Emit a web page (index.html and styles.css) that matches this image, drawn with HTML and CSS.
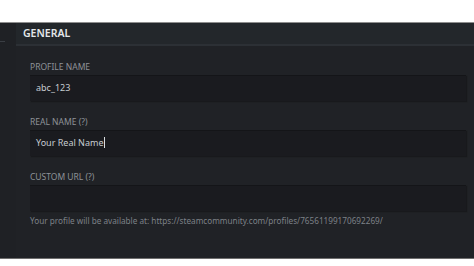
FILE: index.html
```html
<!DOCTYPE html>
<html lang="en">
  <head>
    <meta charset="UTF-8" />
    <meta name="viewport" content="width=device-width, initial-scale=1.0" />
    <title>Edit Profile - General</title>
    <link rel="stylesheet" href="styles.css">
  </head>
  <body>
    <div class="top-space"></div>

    <div class="panel">
      <div class="sidebar">
        <div class="sidebar-line"></div>
      </div>

      <div class="main">
        <h2 class="section-title">GENERAL</h2>

        <div class="form">
          <div class="field">
            <label for="profile-name">PROFILE NAME</label>
            <input type="text" id="profile-name" value="abc_123" />
          </div>

          <div class="field">
            <label for="real-name">REAL NAME (?)</label>
            <div class="input-box">Your Real Name<span class="caret"></span></div>
          </div>

          <div class="field">
            <label for="custom-url">CUSTOM URL (?)</label>
            <input type="text" id="custom-url" value="" />
            <p class="hint">Your profile will be available at: https://steamcommunity.com/profiles/76561199170692269/</p>
          </div>
        </div>
      </div>
    </div>
  </body>
</html>
```

FILE: styles.css
```css
body {
  margin: 0;
  background: #ffffff;
  font-family: "Noto Sans", Arial, sans-serif;
}
.top-space {
  height: 22px;
}
.panel {
  display: flex;
  height: 235px;
  background: #202226;
  border-top: 1px solid #8e8e8e;
  border-bottom: 1px solid #6e6e6e;
}
.sidebar {
  width: 16px;
  background: #1f2125;
}
.sidebar-line {
  margin-top: 18px;
  width: 5px;
  height: 1px;
  background: #3a3e44;
}
.main {
  flex: 1;
}
.section-title {
  margin: 0;
  height: 21px;
  padding-left: 7px;
  line-height: 20px;
  font-size: 10.5px;
  font-weight: 600;
  color: #e4e7ea;
  background: #23272b;
  border-bottom: 2px solid #2c3035;
}
.form {
  padding: 15px 8px 0 14px;
}
.field {
  margin-bottom: 15px;
}
label {
  display: block;
  height: 12px;
  line-height: 12px;
  margin-bottom: 2px;
  font-size: 8.5px;
  color: #8e9298;
}
input,
.input-box {
  display: block;
  box-sizing: border-box;
  width: 100%;
  height: 26px;
  padding: 0 6px;
  border: none;
  outline: none;
  background: #1a1b1f;
  box-shadow: inset 0 1px 0 #141518, 1px 1px 1px #18191c;
  font-family: inherit;
  font-size: 9px;
  line-height: 26px;
  color: #c7ccd1;
}
.caret {
  display: inline-block;
  width: 1px;
  height: 11px;
  margin-left: 1px;
  vertical-align: -2px;
  background: #d8dcdf;
}
.hint {
  margin: 4px 0 0;
  height: 12px;
  line-height: 12px;
  font-size: 8.2px;
  color: #7d8187;
  white-space: nowrap;
}
```
